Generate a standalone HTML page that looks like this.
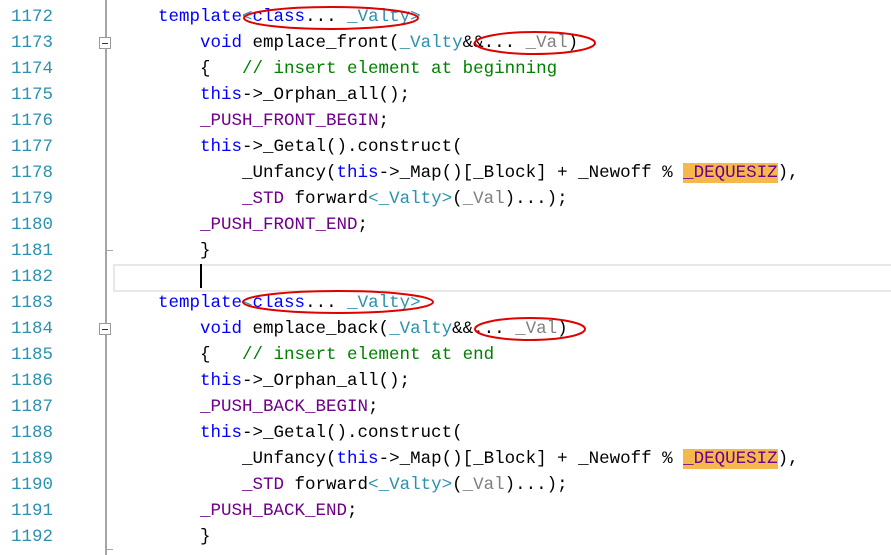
<!DOCTYPE html>
<html><head><meta charset="utf-8"><style>
body{margin:0;width:891px;height:555px;background:#fff;overflow:hidden;position:relative;font-family:"Liberation Mono",monospace;}
.n{position:absolute;left:0;width:53px;text-align:right;color:#2b91af;font-size:17.5px;line-height:26px;}
.c{position:absolute;left:116px;white-space:pre;font-size:17.5px;line-height:26px;color:#000;}
.k{color:#0000ff}.m{color:#6f008a}.t{color:#2b91af}.p{color:#808080}.g{color:#008000}
.hl{background:#f5b84c}
</style></head><body>
<div style="position:absolute;left:113px;top:264px;width:780px;height:24px;border:2px solid #e8e8e8;"></div>
<div style="position:absolute;left:105px;top:0;width:2px;height:555px;background:#a5a5a5"></div>
<div style="position:absolute;left:107px;top:250px;width:6px;height:1px;background:#a5a5a5"></div>
<div style="position:absolute;left:107px;top:549px;width:6px;height:1px;background:#a5a5a5"></div>
<div style="position:absolute;left:99px;top:37px;width:10px;height:10px;border:1px solid #999;background:#fff"><div style="position:absolute;left:2px;top:5px;width:6px;height:1px;background:#333"></div></div>
<div style="position:absolute;left:99px;top:323px;width:10px;height:10px;border:1px solid #999;background:#fff"><div style="position:absolute;left:2px;top:5px;width:6px;height:1px;background:#333"></div></div>
<div style="position:absolute;left:200px;top:264px;width:2px;height:24px;background:#000"></div>

<div class="n" style="top:4px">1172</div><div class="c" style="top:4px">    <span class="k">template</span><span class="t">&lt;</span><span class="k">class</span>... <span class="t">_Valty</span><span class="t">&gt;</span></div>
<div class="n" style="top:30px">1173</div><div class="c" style="top:30px">        <span class="k">void</span> emplace_front(<span class="t">_Valty</span>&amp;&amp;... <span class="p">_Val</span>)</div>
<div class="n" style="top:56px">1174</div><div class="c" style="top:56px">        {   <span class="g">// insert element at beginning</span></div>
<div class="n" style="top:82px">1175</div><div class="c" style="top:82px">        <span class="k">this</span>-&gt;_Orphan_all();</div>
<div class="n" style="top:108px">1176</div><div class="c" style="top:108px">        <span class="m">_PUSH_FRONT_BEGIN</span>;</div>
<div class="n" style="top:134px">1177</div><div class="c" style="top:134px">        <span class="k">this</span>-&gt;_Getal().construct(</div>
<div class="n" style="top:160px">1178</div><div class="c" style="top:160px">            _Unfancy(<span class="k">this</span>-&gt;_Map()[_Block] + _Newoff % <span class="m hl">_DEQUESIZ</span>),</div>
<div class="n" style="top:186px">1179</div><div class="c" style="top:186px">            <span class="m">_STD</span> forward<span class="t">&lt;_Valty&gt;</span>(<span class="p">_Val</span>)...);</div>
<div class="n" style="top:212px">1180</div><div class="c" style="top:212px">        <span class="m">_PUSH_FRONT_END</span>;</div>
<div class="n" style="top:238px">1181</div><div class="c" style="top:238px">        }</div>
<div class="n" style="top:264px">1182</div>
<div class="n" style="top:290px">1183</div><div class="c" style="top:290px">    <span class="k">template</span><span class="t">&lt;</span><span class="k">class</span>... <span class="t">_Valty</span><span class="t">&gt;</span></div>
<div class="n" style="top:316px">1184</div><div class="c" style="top:316px">        <span class="k">void</span> emplace_back(<span class="t">_Valty</span>&amp;&amp;... <span class="p">_Val</span>)</div>
<div class="n" style="top:342px">1185</div><div class="c" style="top:342px">        {   <span class="g">// insert element at end</span></div>
<div class="n" style="top:368px">1186</div><div class="c" style="top:368px">        <span class="k">this</span>-&gt;_Orphan_all();</div>
<div class="n" style="top:394px">1187</div><div class="c" style="top:394px">        <span class="m">_PUSH_BACK_BEGIN</span>;</div>
<div class="n" style="top:420px">1188</div><div class="c" style="top:420px">        <span class="k">this</span>-&gt;_Getal().construct(</div>
<div class="n" style="top:446px">1189</div><div class="c" style="top:446px">            _Unfancy(<span class="k">this</span>-&gt;_Map()[_Block] + _Newoff % <span class="m hl">_DEQUESIZ</span>),</div>
<div class="n" style="top:472px">1190</div><div class="c" style="top:472px">            <span class="m">_STD</span> forward<span class="t">&lt;_Valty&gt;</span>(<span class="p">_Val</span>)...);</div>
<div class="n" style="top:498px">1191</div><div class="c" style="top:498px">        <span class="m">_PUSH_BACK_END</span>;</div>
<div class="n" style="top:524px">1192</div><div class="c" style="top:524px">        }</div>

<svg style="position:absolute;left:0;top:0" width="891" height="555">
<g fill="none" stroke="#e00000" stroke-width="2">
<ellipse cx="331" cy="18" rx="87" ry="11"/>
<ellipse cx="535" cy="43" rx="60" ry="11"/>
<ellipse cx="338" cy="302" rx="95" ry="11"/>
<ellipse cx="530" cy="329" rx="55" ry="11"/>
</g></svg>
</body></html>
